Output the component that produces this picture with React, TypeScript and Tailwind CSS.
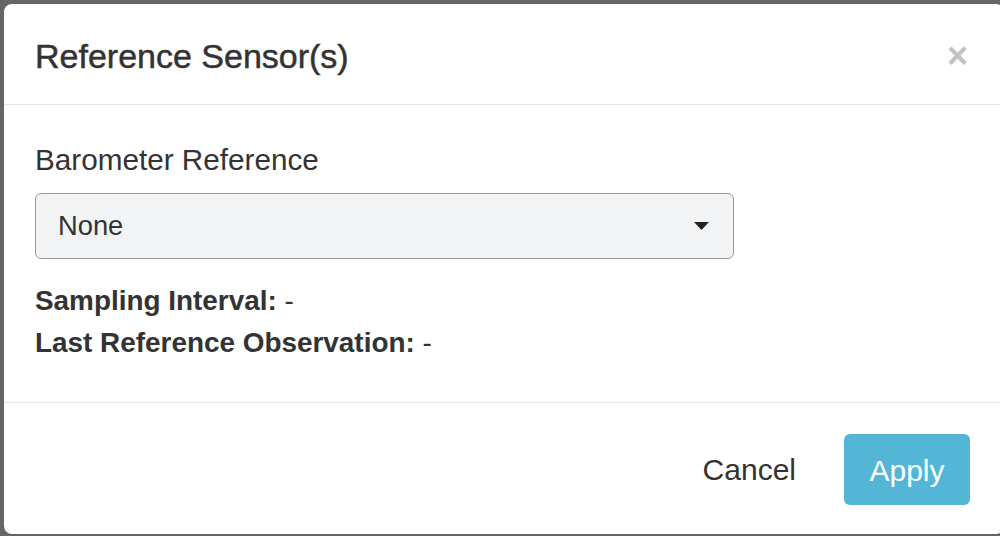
import React from "react";

export default function App() {
  return (
    <div
      className="w-[1000px] h-[536px] bg-[#666666] pt-[4px] pl-[4px] overflow-hidden"
      style={{ fontFamily: '"Liberation Sans", Arial, sans-serif' }}
    >
      <div className="w-[1000px] h-[530px] bg-white rounded-[8px] flex flex-col text-[#333333]">
        <div className="h-[101px] border-b border-[#e5e5e5] flex items-center justify-between pl-[31px] pr-[36px]">
          <h4 className="text-[34px] leading-[40px] font-normal pt-[4px] [-webkit-text-stroke:0.5px_#333333]">
            Reference Sensor(s)
          </h4>
          <span className="text-[#c2c2c2] text-[36px] font-bold leading-none mt-[4px]">×</span>
        </div>
        <div className="h-[298px] border-b border-[#e5e5e5] pl-[31px] pt-[38px]">
          <div className="text-[29.7px] leading-[34px]">Barometer Reference</div>
          <div className="mt-[16px] w-[699px] h-[66px] border border-[#9a9a9a] rounded-[6px] bg-[#f2f3f5] flex items-center justify-between pl-[22px] pr-[24px]">
            <span className="text-[27.3px]">None</span>
            <svg width="15" height="8" viewBox="0 0 15 8">
              <polygon points="0,0 15,0 7.5,8" fill="#222" />
            </svg>
          </div>
          <div className="mt-[21px] text-[27.9px] leading-[42px]">
            <div>
              <b>Sampling Interval:</b> -
            </div>
            <div>
              <b>Last Reference Observation:</b> -
            </div>
          </div>
        </div>
        <div className="flex items-center justify-end pr-[34px] pt-[31px] gap-[48px]">
          <span className="text-[30px]">Cancel</span>
          <button className="w-[126px] h-[71px] rounded-[6px] bg-[#53b6d7] text-white text-[30px] pt-[2px]">
            Apply
          </button>
        </div>
      </div>
    </div>
  );
}
